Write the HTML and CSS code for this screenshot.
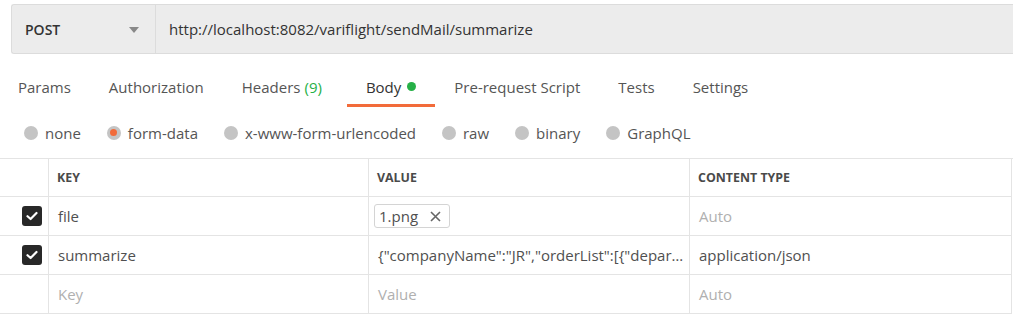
FILE: index.html
```html
<!DOCTYPE html>
<html lang="en">
<head>
  <meta charset="UTF-8" />
  <title>Request</title>
  <link rel="stylesheet" href="styles.css">
</head>
<body>
  <div class="urlbar">
    <div class="method">
      <span>POST</span>
      <span class="caret"></span>
    </div>
    <div class="url">http://localhost:8082/variflight/sendMail/summarize</div>
  </div>

  <div class="tabs">
    <div class="tab">Params</div>
    <div class="tab">Authorization</div>
    <div class="tab badge">Headers <span class="count">(9)</span></div>
    <div class="tab active">Body <span class="dot"></span></div>
    <div class="tab">Pre-request Script</div>
    <div class="tab">Tests</div>
    <div class="tab">Settings</div>
  </div>

  <div class="modes">
    <label class="mode"><span class="radio"></span>none</label>
    <label class="mode"><span class="radio on"></span>form-data</label>
    <label class="mode"><span class="radio"></span>x-www-form-urlencoded</label>
    <label class="mode"><span class="radio"></span>raw</label>
    <label class="mode"><span class="radio"></span>binary</label>
    <label class="mode"><span class="radio"></span>GraphQL</label>
  </div>

  <div class="grid">
    <div class="cell check"></div>
    <div class="cell head">KEY</div>
    <div class="cell head">VALUE</div>
    <div class="cell head">CONTENT TYPE</div>

    <div class="cell check"><span class="box"><svg width="12" height="10" viewBox="0 0 12 10"><path d="M1.5 5.2 L4.6 8 L10.5 2" fill="none" stroke="#fff" stroke-width="2.2" stroke-linecap="round" stroke-linejoin="round"/></svg></span></div>
    <div class="cell">file</div>
    <div class="cell"><span class="chip">1.png <svg width="11" height="11" viewBox="0 0 11 11"><path d="M1 1 L10 10 M10 1 L1 10" stroke="#666" stroke-width="1.6"/></svg></span></div>
    <div class="cell muted">Auto</div>

    <div class="cell check"><span class="box"><svg width="12" height="10" viewBox="0 0 12 10"><path d="M1.5 5.2 L4.6 8 L10.5 2" fill="none" stroke="#fff" stroke-width="2.2" stroke-linecap="round" stroke-linejoin="round"/></svg></span></div>
    <div class="cell">summarize</div>
    <div class="cell">{"companyName":"JR","orderList":[{"depar…</div>
    <div class="cell">application/json</div>

    <div class="cell check"></div>
    <div class="cell muted">Key</div>
    <div class="cell muted">Value</div>
    <div class="cell muted">Auto</div>
  </div>
</body>
</html>
```

FILE: styles.css
```css
* {
  box-sizing: border-box;
}

body {
  margin: 0;
  font-family: "Open Sans", sans-serif;
  font-size: 15px;
  color: #505050;
  background: #fff;
  padding-top: 4px;
}

.urlbar {
  display: flex;
  margin-left: 11px;
  height: 50px;
  background: #ececec;
  border: 1px solid #dcdcdc;
  border-right: none;
  border-radius: 3px 0 0 3px;
}

.method {
  width: 144px;
  display: flex;
  align-items: center;
  justify-content: space-between;
  padding: 0 16px 0 13px;
  border-right: 1px solid #dcdcdc;
  font-weight: 600;
  font-size: 14px;
  color: #333;
}

.caret {
  width: 0;
  height: 0;
  border-left: 5px solid transparent;
  border-right: 5px solid transparent;
  border-top: 6px solid #888;
  margin-top: 2px;
}

.url {
  display: flex;
  align-items: center;
  padding-left: 13px;
  color: #333;
}

.tabs {
  display: flex;
  margin-top: 15px;
  height: 38px;
}

.tab {
  padding: 0 19px;
  display: flex;
  align-items: center;
  gap: 5px;
  color: #555;
  border-bottom: 3px solid transparent;
}

.tab:first-child {
  padding-left: 18px;
}

.tab.badge {
  padding-right: 25px;
}

.tab.active {
  color: #333;
  border-bottom-color: #f26b3a;
}

.count {
  color: #26b047;
  margin-left: -1px;
}

.dot {
  width: 9px;
  height: 9px;
  border-radius: 50%;
  background: #26b047;
  margin-left: 1px;
}

.modes {
  display: flex;
  align-items: center;
  gap: 26px;
  padding-left: 24px;
  height: 51px;
  color: #555;
}

.mode {
  display: flex;
  align-items: center;
  gap: 7px;
}

.radio {
  width: 14px;
  height: 14px;
  border-radius: 50%;
  background: #c4c4c4;
  display: flex;
  align-items: center;
  justify-content: center;
}

.radio.on::after {
  content: "";
  width: 7px;
  height: 7px;
  border-radius: 50%;
  background: #f26b3a;
}

.grid {
  display: grid;
  grid-template-columns: 49px 320px 321px 322px;
  border-top: 1px solid #e4e4e4;
  width: 1013px;
}

.cell {
  display: flex;
  align-items: center;
  padding: 0 9px;
  border-bottom: 1px solid #e4e4e4;
  border-right: 1px solid #e4e4e4;
  white-space: nowrap;
  overflow: hidden;
  height: 39px;
}

.grid .cell:nth-child(-n+4) {
  height: 38px;
}

.head {
  font-size: 12.4px;
  font-weight: 700;
  color: #4a4a4a;
  padding-left: 8px;
}

.check {
  justify-content: flex-end;
  padding: 0 6px 0 0;
}

.box {
  width: 20px;
  height: 20px;
  border-radius: 3px;
  background: #282828;
  display: flex;
  align-items: center;
  justify-content: center;
}

.muted {
  color: #b0b0b0;
}

.chip {
  display: inline-flex;
  align-items: center;
  gap: 12px;
  border: 1px solid #d4d4d4;
  border-radius: 3px;
  height: 24px;
  padding: 0 8px 0 4px;
  margin-left: -4px;
  color: #505050;
}
```
